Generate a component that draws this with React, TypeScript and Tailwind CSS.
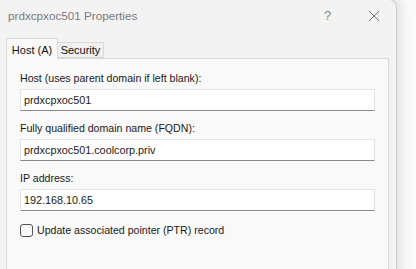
const font = { fontFamily: '"Liberation Sans", Arial, sans-serif' };

function Field({ label, value }: { label: string; value: string }) {
  return (
    <div className="flex flex-col">
      <div className="h-[20px] flex items-center text-[10.6px] text-[#1a1a1a] leading-none">{label}</div>
      <div className="h-[22px] mt-[1px] bg-white border border-[#e3e3e3] border-b-[#8a8a8a] flex items-center px-[3px] text-[10.8px] text-[#1a1a1a]">
        {value}
      </div>
    </div>
  );
}

export default function App() {
  return (
    <div className="w-[416px] h-[269px] overflow-hidden bg-[#fbfbfb]" style={font}>
      <div className="w-[397px] h-[290px] bg-[#f3f3f3] border-r border-t border-[#cfcfcf] rounded-tr-[8px] shadow-[4px_0_12px_rgba(0,0,0,0.12)] flex flex-col -mt-[1px]">
        <div className="h-[32px] flex items-center pl-[8px] text-[#7a7a7a]">
          <span className="text-[11.7px] flex-1">prdxcpxoc501 Properties</span>
          <span className="text-[13px] w-[12px] mr-[32px] text-[#8a8a8a]">?</span>
          <svg width="12" height="12" viewBox="0 0 12 12" className="mr-[16px]">
            <path d="M1 1L11 11M11 1L1 11" stroke="#777" strokeWidth="1" />
          </svg>
        </div>
        <div className="flex items-end pl-[6px] h-[26px] relative z-10">
          <div className="h-[21px] w-[52px] bg-[#f9f9f9] border border-b-0 border-[#d9d9d9] flex items-start pt-[3px] justify-center text-[11px] text-[#111] -mb-[1px]">
            Host (A)
          </div>
          <div className="h-[16px] w-[46px] bg-[#f0f0f0] border border-l-0 border-[#d9d9d9] flex items-center justify-center text-[11px] text-[#111]">
            Security
          </div>
        </div>
        <div className="ml-[6px] w-[383px] flex-1 bg-[#f9f9f9] border border-[#d9d9d9] px-[13px] pt-[9px] flex flex-col gap-[7px]">
          <Field label="Host (uses parent domain if left blank):" value="prdxcpxoc501" />
          <Field label="Fully qualified domain name (FQDN):" value="prdxcpxoc501.coolcorp.priv" />
          <Field label="IP address:" value="192.168.10.65" />
          <label className="flex items-center gap-[4px] mt-[5px]">
            <span className="w-[13px] h-[13px] rounded-[3px] border border-[#555] bg-[#f9f9f9]" />
            <span className="text-[10.6px] text-[#1a1a1a]">Update associated pointer (PTR) record</span>
          </label>
        </div>
      </div>
    </div>
  );
}
